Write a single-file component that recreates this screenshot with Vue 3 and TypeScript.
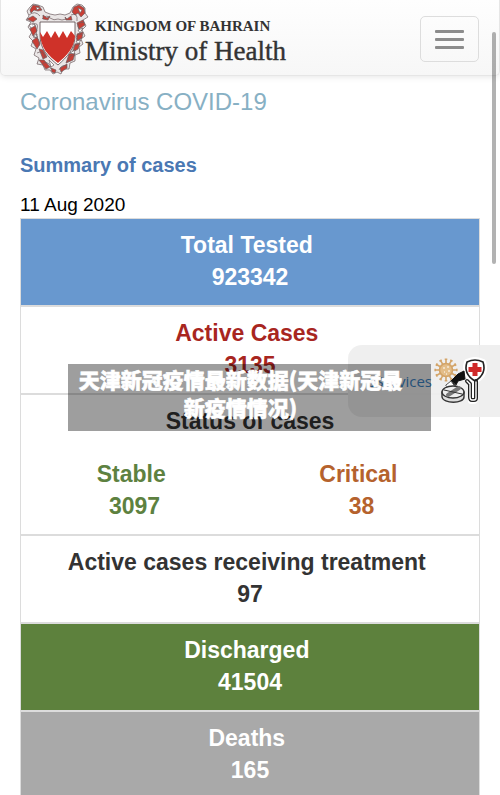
<script setup lang="ts">
interface Stat {
  label: string
  value: number
  tone: string
}

const before: Stat[] = [
  { label: 'Total Tested', value: 923342, tone: 'tested' },
  { label: 'Active Cases', value: 3135, tone: 'active' },
]
const status: Stat[] = [
  { label: 'Stable', value: 3097, tone: 'stable' },
  { label: 'Critical', value: 38, tone: 'critical' },
]
const after: Stat[] = [
  { label: 'Active cases receiving treatment', value: 97, tone: 'treatment' },
  { label: 'Discharged', value: 41504, tone: 'discharged' },
  { label: 'Deaths', value: 165, tone: 'deaths' },
]
const spikes: number[] = Array.from({ length: 12 }, (_, i) => i * 30)
</script>

<template>
  <div class="page">
    <header class="bar">
      <a class="brand" href="#">
        <svg class="emblem" viewBox="0 0 64 72" aria-hidden="true">
          <g stroke="#6b5c5e" stroke-width="0.7" stroke-linejoin="round">
            <path fill="#eae6e6" d="M2 8L5 4 8 1 13 2 18 4 20 9 25 11 30 12 35 11 40 12 45 10 48 4 52 1 57 2 60 5 60 10 63 14 58 17 61 23 57 27 60 33 56 36 58 41 54 44 55 50 50 52 50 58 45 60 44 66 38 66 36 71 32 69 28 71 25 67 20 67 18 62 12 61 14 55 9 52 11 46 6 43 8 38 4 34 7 29 3 24 6 19 1 17 4 13z" />
            <path fill="#c83e35" d="M5 7L8 2 14 3 17 7 13 8 9 7 6 10zM2 16L8 13 12 16 8 19zM5 26L10 22 12 28 8 33zM7 38L12 34 15 41 12 46zM14 46L18 47 22 54 18 56zM14 57L19 57 25 64 21 66zM26 65L31 67 30 70 27 69z" />
            <path fill="#c83e35" d="M47 9L49 4 54 2 59 5 60 10 56 14 53 10 50 12zM52 20L58 17 60 22 54 26zM52 31L58 29 57 35 52 38zM50 41L55 40 53 46 48 49zM44 51L50 50 48 57 41 60zM35 65L42 61 42 65 36 69z" />
            <path fill="#fff" d="M11 4L15 5 12 7zM53 5L57 7 55 10zM4 22L9 20 10 23 6 25zM8 33L12 31 12 35zM53 27L58 25 55 30zM51 38L56 37 53 41zM45 50L50 47 49 51zM24 57L29 62 26 64z" />
            <path fill="none" d="M4 12q6-5 11 1M7 22q7-4 5 4t1 8M8 34q8 0 6 9M12 50q7-4 8 5M18 60q7-2 8 6M46 12q7-3 6 6M59 19q-9 1-5 7M57 31q-8 0-5 6M54 41q-7 1-6 7M50 52q-6-1-7 7M42 63q-5-2-8 4M17 16q5-5 8-1 4 3 8 1 4 2 8 0" />
            <path fill="#c83e35" d="M18 12L22 15 25 13 23 17 18 16zM46 13L42 16 40 14 41 17 47 17z" />
          </g>
          <path fill="#fff" stroke="#55484a" stroke-width="0.8" d="M15 19h35v13c0 14-8 22-17 30-10-8-18-16-18-30z" />
          <path fill="#cf3229" d="M15 29l3 5 4-6 4 7 4-7 4 7 4-7 4 7 4-7 4 5c-1 13-9 20-17 27-9-7-18-15-18-31z" />
        </svg>
        <span class="names">
          <span class="kingdom">KINGDOM OF BAHRAIN</span>
          <span class="ministry">Ministry of Health</span>
        </span>
      </a>
      <button class="toggle" type="button" aria-label="Toggle navigation">
        <span class="line"></span>
        <span class="line"></span>
        <span class="line"></span>
      </button>
    </header>

    <main class="content">
      <h1>Coronavirus COVID-19</h1>
      <h2>Summary of cases</h2>
      <p class="date">11 Aug 2020</p>

      <section v-for="s in before" :key="s.label" class="card" :class="s.tone">
        <div>{{ s.label }}&nbsp;</div>
        <div>{{ s.value }}</div>
      </section>
      <section class="card">
        <div>Status of cases</div>
        <div class="split">
          <div v-for="s in status" :key="s.label" :class="s.tone">
            <div>{{ s.label }}&nbsp;</div>
            <div>{{ s.value }}</div>
          </div>
        </div>
      </section>
      <section v-for="s in after" :key="s.label" class="card" :class="s.tone">
        <div>{{ s.label }}&nbsp;</div>
        <div>{{ s.value }}</div>
      </section>
    </main>

    <a class="services" href="#">
      <span>eServices</span>
      <svg class="medical" viewBox="0 0 54 48" aria-hidden="true">
        <g stroke="#d3a468" fill="none" stroke-width="1.6">
          <circle cx="12" cy="13" r="6.5" fill="#e3bd88" />
          <g v-for="a in spikes" :key="a" :transform="`rotate(${a} 12 13)`">
            <path d="M12 6.5V2.5M10.700 2.200h2.600" />
          </g>
          <path stroke="#fff" stroke-width="1" d="M9 11h2M13 10h2M10 15h1M14 14h2M12 17h1" />
        </g>
        <g fill="none" stroke-linecap="round" stroke-linejoin="round">
          <path stroke="#fff" stroke-width="6" d="M33 5q-4 12 8 19 12-7 8-19-8-4-16 0zM41 24v18q0 2-2 2h-2" />
          <path fill="#fff" stroke="#222" stroke-width="1.600" d="M33 5q-4 12 8 19 12-7 8-19-8-4-16 0z" />
          <path stroke="#222" stroke-width="4" d="M42 24v17q0 2-2 2h-2q-2 0-2-3V27l-3-3" />
          <path stroke="#fff" stroke-width="1.400" d="M42 25v16q0 2-2 2h-2q-2 0-2-3V27l-3-3" />
          <path fill="#111" stroke="#111" d="M17 24l7-7 6-3 1 8-7 2-2 4z" />
          <path fill="#fff" stroke="#555" d="M12 28l5-4 5 7-3 4z" />
          <path fill="#ddd" stroke="#333" stroke-width="1.400" d="M8 35v5c1 7 22 7 22 0v-5" />
          <ellipse cx="19" cy="35" rx="11" ry="6" fill="#eee" stroke="#333" stroke-width="1.400" />
          <path stroke="#777" stroke-width="4" d="M14 38l11-7" />
          <path stroke="#333" d="M10 33l18 4" />
        </g>
        <path fill="#cf2a2a" d="M38.500 6h5v4h4v5h-4v4h-5v-4h-4v-5h4z" />
      </svg>
    </a>

    <div class="caption">天津新冠疫情最新数据(天津新冠最新疫情情况)</div>
    <div class="scroll" aria-hidden="true"></div>
  </div>
</template>

<style>
body {
  margin: 0;
  background: #fff;
}
</style>

<style scoped>
.page {
  position: relative;
  height: 100vh;
  overflow: hidden;
  font-family: "Liberation Sans", Arial, sans-serif;
  color: #000;
}
.bar {
  box-sizing: border-box;
  height: 76px;
  display: flex;
  align-items: center;
  justify-content: space-between;
  padding: 3px 20px 0 24px;
  border: 1px solid #e6e6e6;
  border-top: 0;
  border-radius: 0 0 5px 5px;
  background: linear-gradient(#fefefe, #f7f7f7);
  box-shadow: 0 1px 6px rgba(0, 0, 0, 0.1);
}
.brand {
  display: flex;
  align-items: center;
  color: #333;
  text-decoration: none;
}
.emblem {
  width: 64px;
  height: 72px;
}
.names {
  display: flex;
  flex-direction: column;
  margin-left: -4px;
  padding-top: 3px;
  font-family: "Liberation Serif", serif;
  white-space: nowrap;
}
.kingdom {
  padding-left: 10px;
  font-size: 15px;
  line-height: 20px;
  font-weight: bold;
}
.ministry {
  font-size: 27px;
  line-height: 30px;
  -webkit-text-stroke: 0.4px #333;
}
.toggle {
  width: 59px;
  height: 46px;
  padding: 0 14px;
  display: flex;
  flex-direction: column;
  justify-content: center;
  gap: 5px;
  border: 1px solid #ddd;
  border-radius: 5px;
  background: transparent;
}
.line {
  height: 3px;
  border-radius: 1px;
  background: #8c8c8c;
}
.content {
  padding: 11px 20px 0;
}
h1 {
  margin: 0;
  color: #87b0c4;
  font-size: 24px;
  line-height: 30px;
  font-weight: normal;
}
h2 {
  margin: 36px 0 0;
  color: #4a78b3;
  font-size: 20px;
  line-height: 24px;
}
.date {
  margin: 16px 0 1px;
  font-size: 19px;
  line-height: 24px;
}
.card {
  padding: 10px 0 12px;
  border: 1px solid #dcdcdc;
  color: #333;
  font-size: 23px;
  line-height: 32px;
  font-weight: bold;
  text-align: center;
}
.split {
  display: grid;
  grid-template-columns: 1fr 1fr;
  padding: 21px 4px 0 0;
}
.tested {
  color: #fff;
  background: #6898cf;
}
.active {
  color: #a8261f;
}
.stable {
  color: #5d8140;
}
.critical {
  color: #b5622d;
}
.discharged {
  color: #fff;
  background: #5d813d;
}
.deaths {
  color: #fff;
  background: #a9a9a9;
}
.services {
  position: absolute;
  top: 345px;
  right: 0;
  box-sizing: border-box;
  width: 152px;
  height: 72px;
  display: flex;
  align-items: center;
  justify-content: flex-end;
  gap: 2px;
  padding-right: 12px;
  border-radius: 14px 0 0 14px;
  background: rgba(238, 238, 238, 0.92);
  color: #3b83c4;
  font-family: "Open Sans", "Noto Sans", sans-serif;
  font-size: 15px;
  line-height: 24px;
  text-decoration: none;
}
.medical {
  width: 54px;
  height: 48px;
}
.caption {
  position: absolute;
  top: 364px;
  left: 68px;
  right: 69px;
  box-sizing: border-box;
  padding: 1px 26px 10px 8px;
  background: rgba(0, 0, 0, 0.38);
  color: #fff;
  font-family: "Noto Sans CJK SC", sans-serif;
  font-size: 21px;
  line-height: 28px;
  font-weight: 900;
  text-align: center;
  -webkit-text-stroke: 0.6px #fff;
}
.scroll {
  position: absolute;
  top: 32px;
  right: 4px;
  width: 4px;
  height: 232px;
  border-radius: 2px;
  background: rgba(0, 0, 0, 0.3);
}
</style>
